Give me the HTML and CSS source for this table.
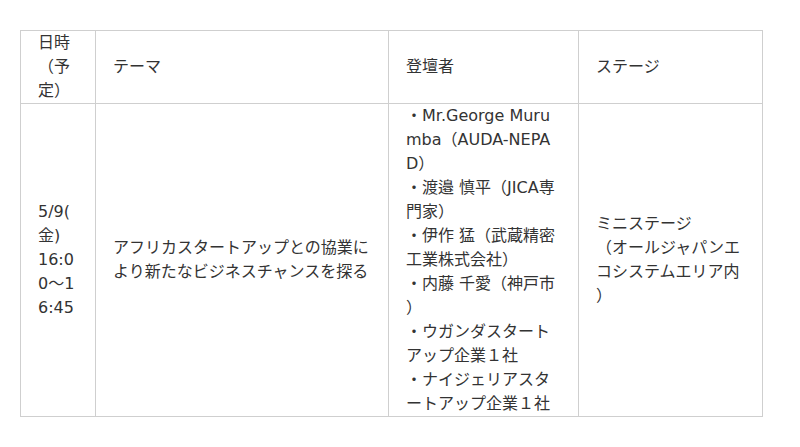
FILE: index.html
```html
<!DOCTYPE html>
<html lang="ja">
<head>
<meta charset="utf-8">
<link rel="stylesheet" href="styles.css">
</head>
<body>
<div class="page">
<table class="schedule">
  <colgroup>
    <col class="c1"><col class="c2"><col class="c3"><col class="c4">
  </colgroup>
  <thead>
    <tr>
      <th>日時（予定）</th>
      <th>テーマ</th>
      <th>登壇者</th>
      <th>ステージ</th>
    </tr>
  </thead>
  <tbody>
    <tr>
      <td>5/9(金)<br>16:00～16:45</td>
      <td>アフリカスタートアップとの協業により新たなビジネスチャンスを探る</td>
      <td>・Mr.George Murumba（AUDA-NEPAD）<br>・渡邉 慎平（JICA専門家）<br>・伊作 猛（武蔵精密工業株式会社）<br>・内藤 千愛（神戸市）<br>・ウガンダスタートアップ企業１社<br>・ナイジェリアスタートアップ企業１社</td>
      <td>ミニステージ<br>（オールジャパンエコシステムエリア内）</td>
    </tr>
  </tbody>
</table>
</div>
</body>
</html>
```
FILE: styles.css
```css
html, body {
  margin: 0;
  padding: 0;
  background: #fff;
}
.page {
  padding: 30px 0 0 20px;
}
.schedule {
  border-collapse: collapse;
  table-layout: fixed;
  width: 742px;
  font-family: "DejaVu Sans", "Noto Sans CJK JP", sans-serif;
  font-size: 16px;
  line-height: 24px;
  color: #333;
}
.c1 { width: 75px; }
.c2 { width: 293px; }
.c3 { width: 190px; }
.c4 { width: 184px; }
.schedule th,
.schedule td {
  border: 1px solid #cfcfcf;
  padding: 0 17px;
  text-align: left;
  vertical-align: middle;
  font-weight: normal;
  word-break: break-all;
  line-break: anywhere;
  overflow-wrap: anywhere;
}
```
